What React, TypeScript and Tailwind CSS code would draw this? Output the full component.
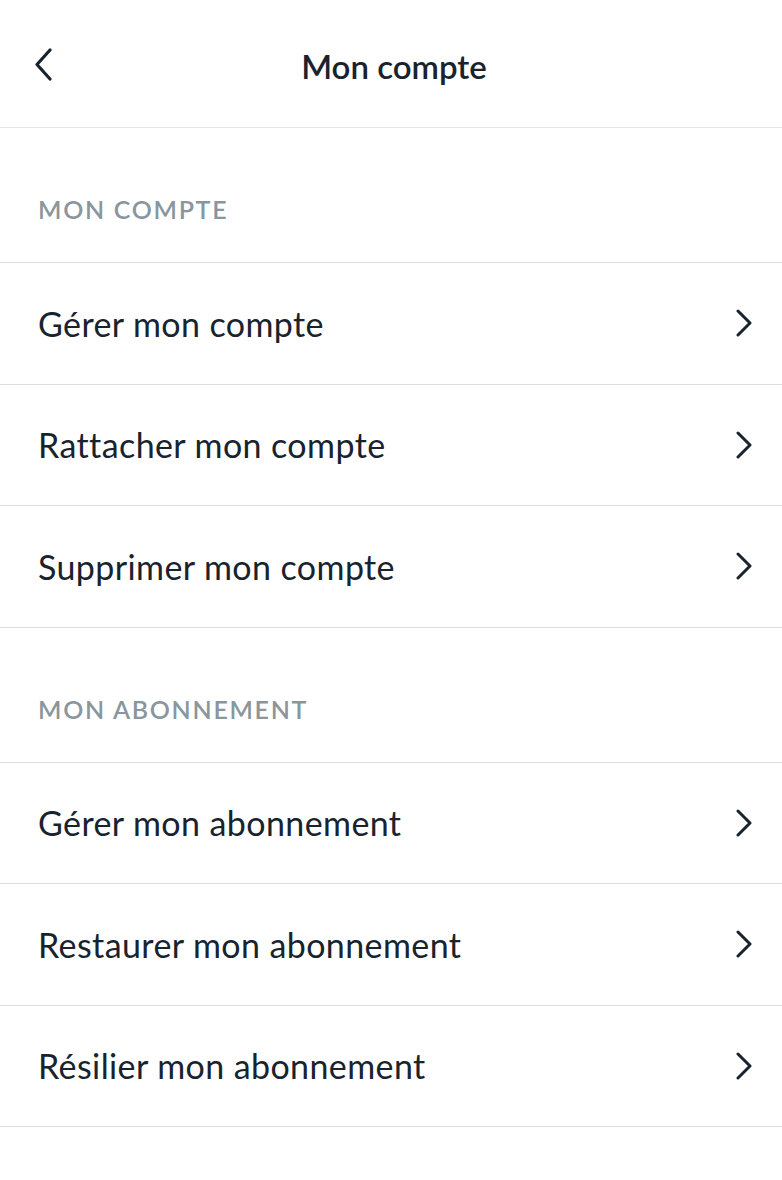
const sections = [
  {
    title: "MON COMPTE",
    items: ["Gérer mon compte", "Rattacher mon compte", "Supprimer mon compte"],
  },
  {
    title: "MON ABONNEMENT",
    items: ["Gérer mon abonnement", "Restaurer mon abonnement", "Résilier mon abonnement"],
  },
];

export default function App() {
  return (
    <div className="min-h-[1180px] bg-white text-[#18232e] font-['Lato','Noto_Sans',sans-serif]">
      {/* Header */}
      <div className="relative flex h-[128px] items-center justify-center border-b border-[#e6e6e6] pl-[6px] pt-[6px]">
        <button className="absolute left-[34px] top-[48px] text-[#18232e]">
          <svg width="19" height="33" viewBox="0 0 19 33" fill="none" stroke="currentColor" strokeWidth={3.2} strokeLinecap="round" strokeLinejoin="round">
            <path d="M16 2 3 16.5 16 31" />
          </svg>
        </button>
        <h1 className="text-[33px] font-semibold">Mon compte</h1>
      </div>

      {sections.map((section) => (
        <div key={section.title}>
          <div className="flex h-[135px] items-center border-b border-[#dcdcdc] px-[38px] pt-[30px]">
            <span className="text-[25px] font-semibold tracking-[1.7px] text-[#8a959d]">
              {section.title}
            </span>
          </div>
          {section.items.map((item) => (
            <div
              key={item}
              className="flex h-[121.5px] items-center justify-between border-b border-[#dcdcdc] pl-[38px] pr-[30px]"
            >
              <span className="text-[34px] tracking-[0.4px]">{item}</span>
              <svg className="text-[#18232e]" width="16" height="28" viewBox="0 0 16 28" fill="none" stroke="currentColor" strokeWidth={3} strokeLinecap="round" strokeLinejoin="round">
                <path d="M2 2l12 12L2 26" />
              </svg>
            </div>
          ))}
        </div>
      ))}
    </div>
  );
}
